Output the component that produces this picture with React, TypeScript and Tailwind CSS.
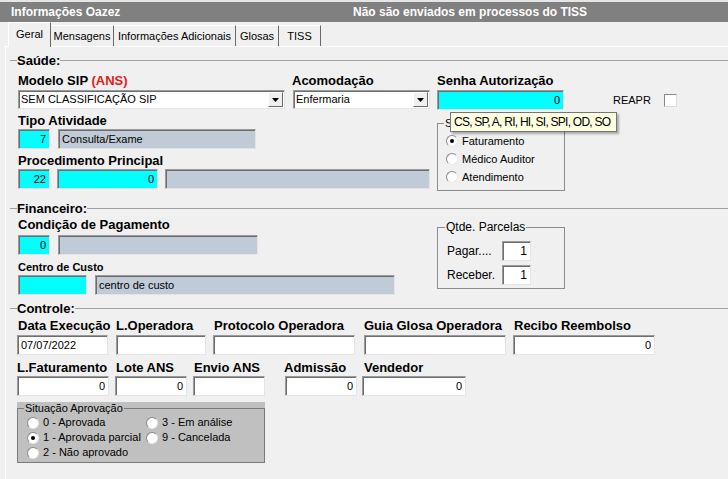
import React from "react"

const sunken =
	"border border-[#9a9a9a] border-r-[#e4e4e4] border-b-[#e4e4e4] shadow-[inset_1px_1px_0_#6e6e6e]"

type FieldProps = { className?: string; value?: string; left?: boolean }

const Field = ({ className = "", value = "", left = false }: FieldProps) => (
	<div
		className={`${sunken} h-[20px] flex items-center text-[11px] leading-none px-[3px] ${
			left ? "justify-start" : "justify-end"
		} ${className}`}>
		{value}
	</div>
)

const Select = ({ className = "", value }: { className?: string; value: string }) => (
	<div className={`${sunken} h-[19px] bg-white flex items-center text-[11px] ${className}`}>
		<span className="flex-1 pl-[2px] truncate">{value}</span>
		<div className="w-[15px] h-[15px] mr-[1px] bg-[#f0f0f0] border border-white border-r-[#696969] border-b-[#696969] flex items-center justify-center">
			<svg width="7" height="4" viewBox="0 0 7 4">
				<path d="M0 0h7L3.5 4z" fill="#000" />
			</svg>
		</div>
	</div>
)

const Label = ({ children, className = "" }: { children: React.ReactNode; className?: string }) => (
	<div className={`font-bold text-[13px] leading-[15px] h-[15px] whitespace-nowrap ${className}`}>
		{children}
	</div>
)

const Heading = ({ children, className = "" }: { children: React.ReactNode; className?: string }) => (
	<div className={`flex items-center h-[15px] pl-[4px] ${className}`}>
		<div className="w-[7px] border-t border-[#a0a0a0]" />
		<span className="font-bold text-[13px] leading-[15px]">{children}</span>
		<div className="flex-1 border-t border-[#a0a0a0]" />
	</div>
)

const Radio = ({ checked = false }: { checked?: boolean }) => (
	<span className="w-[12px] h-[12px] shrink-0 rounded-full bg-white border border-[#8a8a8a] border-r-[#e8e8e8] border-b-[#e8e8e8] flex items-center justify-center">
		{checked && <span className="w-[4px] h-[4px] rounded-full bg-black" />}
	</span>
)

const tabs = ["Mensagens", "Informações Adicionais", "Glosas", "TISS"]
const tabW = ["w-[63px]", "w-[122px]", "w-[43px]", "w-[42px]"]

export default function App() {
	return (
		<div className="relative w-[728px] h-[479px] overflow-hidden bg-[#f0f0f0] text-black font-['Liberation_Sans',Arial,sans-serif] flex flex-col">
			{/* barra de título */}
			<div className="h-[22px] shrink-0 bg-[#808080] border-t-2 border-t-[#e6e6e6] flex items-center text-white font-bold text-[12px]">
				<span className="w-[353px] pl-[11px]">Informações Oazez</span>
				<span>Não são enviados em processos do TISS</span>
			</div>

			{/* abas */}
			<div className="h-[25px] shrink-0 flex items-end pl-[8px] text-[11px] relative z-10 -mb-px">
				<div className="w-[43px] h-[25px] bg-[#f0f0f0] border-l border-t border-white border-r border-r-[#696969] flex items-center justify-center pb-[1px]">
					Geral
				</div>
				{tabs.map((t, i) => (
					<div
						key={t}
						className={`${tabW[i]} h-[21px] border-t border-white border-r border-r-[#696969] flex items-center justify-center mb-px`}>
						{t}
					</div>
				))}
			</div>

			{/* página */}
			<div className="flex-1 ml-[5px] border-l border-t border-white">
				<Heading className="mt-[6px]">Saúde:</Heading>
				<div className="flex pl-[12px] mt-[5px]">
					<div className="w-[412px]">
						<div className="flex h-[15px] font-bold text-[13px] leading-[15px]">
							<span className="w-[274px]">
								Modelo SIP <span className="text-[#e81919]">(ANS)</span>
							</span>
							<span>Acomodação</span>
						</div>
						<div className="flex mt-[2px] gap-[8px]">
							<Select className="w-[267px]" value="SEM CLASSIFICAÇÃO SIP" />
							<Select className="w-[137px]" value="Enfermaria" />
						</div>
						<Label className="mt-[4px]">Tipo Atividade</Label>
						<div className="flex mt-[1px] gap-[8px]">
							<Field className="w-[32px] bg-[#00ffff]" value="7" />
							<Field className="w-[198px] bg-[#c0cbd7]" value="Consulta/Exame" left />
						</div>
						<Label className="mt-[4px]">Procedimento Principal</Label>
						<div className="flex mt-[1px]">
							<Field className="w-[32px] bg-[#00ffff]" value="22" />
							<Field className="w-[101px] ml-[7px] bg-[#00ffff]" value="0" />
							<Field className="w-[265px] ml-[7px] bg-[#c0cbd7]" />
						</div>
					</div>

					<div className="ml-[7px] w-[128px]">
						<Label>Senha Autorização</Label>
						<Field className="w-[127px] h-[19px] mt-[2px] bg-[#00ffff]" value="0" />
						<fieldset className="mt-[6px] h-[75px] border border-[#8c8c8c] px-[6px]">
							<legend className="text-[11px] leading-[14px] px-[1px]">S</legend>
							<div className="mt-[2px] pl-[2px] text-[11px]">
								{["Faturamento", "Médico Auditor", "Atendimento"].map((r, i) => (
									<div key={r} className="h-[18px] flex items-center gap-[4px]">
										<Radio checked={i === 0} />
										<span>{r}</span>
									</div>
								))}
							</div>
						</fieldset>
					</div>

					<div className="ml-[48px] mt-[20px] h-[14px] flex items-center text-[11px]">
						<span className="w-[51px]">REAPR</span>
						<span className="w-[13px] h-[13px] bg-white border border-[#8a8a8a] border-r-[#dcdcdc] border-b-[#dcdcdc]" />
					</div>
				</div>

				<Heading className="mt-[10px]">Financeiro:</Heading>
				<div className="flex pl-[12px] mt-[1px]">
					<div className="w-[419px]">
						<Label>Condição de Pagamento</Label>
						<div className="flex mt-[3px] gap-[8px]">
							<Field className="w-[32px] bg-[#00ffff]" value="0" />
							<Field className="w-[200px] bg-[#c0cbd7]" />
						</div>
						<div className="font-bold text-[11px] leading-[13px] mt-[6px]">Centro de Custo</div>
						<div className="flex mt-[1px] gap-[8px]">
							<Field className="w-[69px] bg-[#00ffff]" />
							<Field className="w-[300px] bg-[#c0cbd7]" value="centro de custo" left />
						</div>
					</div>
					<fieldset className="mt-[3px] w-[128px] h-[69px] border border-[#8c8c8c] px-[7px] text-[12px]">
						<legend className="leading-[14px] px-[1px]">Qtde. Parcelas</legend>
						<div className="mt-[7px] pl-[2px] flex items-center">
							<span className="w-[55px]">Pagar....</span>
							<Field className="w-[29px] h-[16px] bg-white text-[12px]" value="1" />
						</div>
						<div className="mt-[4px] pl-[2px] flex items-center">
							<span className="w-[55px]">Receber.</span>
							<Field className="w-[29px] h-[16px] bg-white text-[12px]" value="1" />
						</div>
					</fieldset>
				</div>

				<Heading className="mt-[6px]">Controle:</Heading>
				<div className="pl-[11px]">
					<div className="flex mt-[2px]">
						<div className="w-[91px]">
							<Label className="pl-[1px]">Data Execução</Label>
							<Field className="mt-[2px] bg-white" value="07/07/2022" left />
						</div>
						<div className="w-[90px] ml-[8px]">
							<Label>L.Operadora</Label>
							<Field className="mt-[2px] bg-white" />
						</div>
						<div className="w-[142px] ml-[7px]">
							<Label className="pl-[1px]">Protocolo Operadora</Label>
							<Field className="mt-[2px] bg-white" />
						</div>
						<div className="w-[142px] ml-[9px]">
							<Label>Guia Glosa Operadora</Label>
							<Field className="mt-[2px] bg-white" />
						</div>
						<div className="w-[142px] ml-[7px]">
							<Label className="pl-[1px]">Recibo Reembolso</Label>
							<Field className="mt-[2px] bg-white" value="0" />
						</div>
					</div>
					<div className="flex mt-[5px]">
						<div className="w-[92px]">
							<Label>L.Faturamento</Label>
							<Field className="mt-[1px] bg-white" value="0" />
						</div>
						<div className="w-[72px] ml-[6px]">
							<Label className="pl-[1px]">Lote ANS</Label>
							<Field className="mt-[1px] bg-white" value="0" />
						</div>
						<div className="w-[72px] ml-[6px]">
							<Label className="pl-[1px]">Envio ANS</Label>
							<Field className="mt-[1px] bg-white" />
						</div>
						<div className="w-[72px] ml-[20px]">
							<Label className="-ml-[1px]">Admissão</Label>
							<Field className="mt-[1px] bg-white" value="0" />
						</div>
						<div className="w-[104px] ml-[5px]">
							<Label className="pl-[2px]">Vendedor</Label>
							<Field className="mt-[1px] bg-white" value="0" />
						</div>
					</div>

					<div className="mt-[6px] w-[248px] h-[61px] bg-[#c0c0c0]">
						<fieldset className="h-[61px] border border-[#7a7a7a] px-[6px] text-[11px]">
							<legend className="leading-[12px] px-[1px]">Situação Aprovação</legend>
							<div className="mt-[1px] pl-[3px] grid grid-cols-[119px_auto]">
								{[
									["0 - Aprovada", false],
									["3 - Em análise", false],
									["1 - Aprovada parcial", true],
									["9 - Cancelada", false],
									["2 - Não aprovado", false],
								].map(([t, c]) => (
									<div key={t as string} className="h-[15px] flex items-center gap-[4px] whitespace-nowrap">
										<Radio checked={c as boolean} />
										<span>{t as string}</span>
									</div>
								))}
							</div>
						</fieldset>
					</div>
				</div>
			</div>

			{/* dica */}
			<div className="absolute left-[450px] top-[112px] w-[167px] h-[20px] bg-[#ffffe1] border border-[#767676] shadow-[2px_2px_2px_rgba(0,0,0,0.3)] text-[12px] tracking-[-0.75px] flex items-center pl-[3px] whitespace-nowrap">
				CS, SP, A, RI, HI, SI, SPI, OD, SO
			</div>
		</div>
	)
}
